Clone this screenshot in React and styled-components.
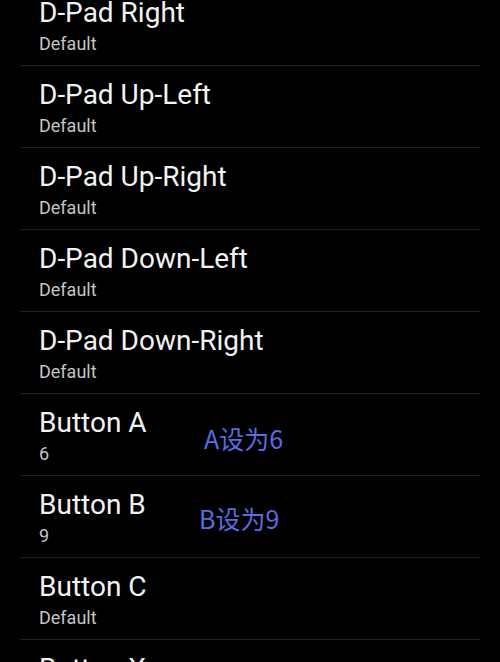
import React from 'react';
import styled, { createGlobalStyle } from 'styled-components';

const GlobalStyle = createGlobalStyle`
  html, body {
    margin: 0;
    padding: 0;
    background: #000;
  }
  body {
    font-family: Roboto, "Noto Sans", sans-serif;
    overflow: hidden;
  }
`;

const Screen = styled.div`
  width: 500px;
  height: 662px;
  overflow: hidden;
  background: #000;
`;

const List = styled.div`
  display: flex;
  flex-direction: column;
  margin-top: -16px;
`;

const Row = styled.div`
  position: relative;
  box-sizing: border-box;
  height: 82px;
  margin: 0 20px;
  padding: 13px 0 0 19px;
  border-bottom: 1px solid #1f1f1f;
  display: flex;
  flex-direction: column;
`;

const Title = styled.div`
  font-size: 28px;
  line-height: 32px;
  color: #f2f2f2;
`;

const Summary = styled.div`
  margin-top: 4px;
  font-size: 18px;
  line-height: 22px;
  color: #c4c4c4;
`;

const Note = styled.span`
  position: absolute;
  left: ${({ $left }) => $left}px;
  top: ${({ $top }) => $top}px;
  font-family: "Noto Sans CJK SC", "Noto Sans", sans-serif;
  font-size: 25px;
  line-height: 25px;
  color: #5a6ce0;
`;

const rows = [
  { title: 'D-Pad Right', value: 'Default' },
  { title: 'D-Pad Up-Left', value: 'Default' },
  { title: 'D-Pad Up-Right', value: 'Default' },
  { title: 'D-Pad Down-Left', value: 'Default' },
  { title: 'D-Pad Down-Right', value: 'Default' },
  { title: 'Button A', value: '6', note: 'A设为6', left: 184, top: 32 },
  { title: 'Button B', value: '9', note: 'B设为9', left: 179, top: 30 },
  { title: 'Button C', value: 'Default' },
  { title: 'Button X', value: 'Default' },
];

const App = () => {
  return (
    <Screen>
      <GlobalStyle />
      <List>
        {rows.map((r) => (
          <Row key={r.title}>
            <Title>{r.title}</Title>
            <Summary>{r.value}</Summary>
            {r.note && (
              <Note $left={r.left} $top={r.top}>{r.note}</Note>
            )}
          </Row>
        ))}
      </List>
    </Screen>
  );
};

export default App;
